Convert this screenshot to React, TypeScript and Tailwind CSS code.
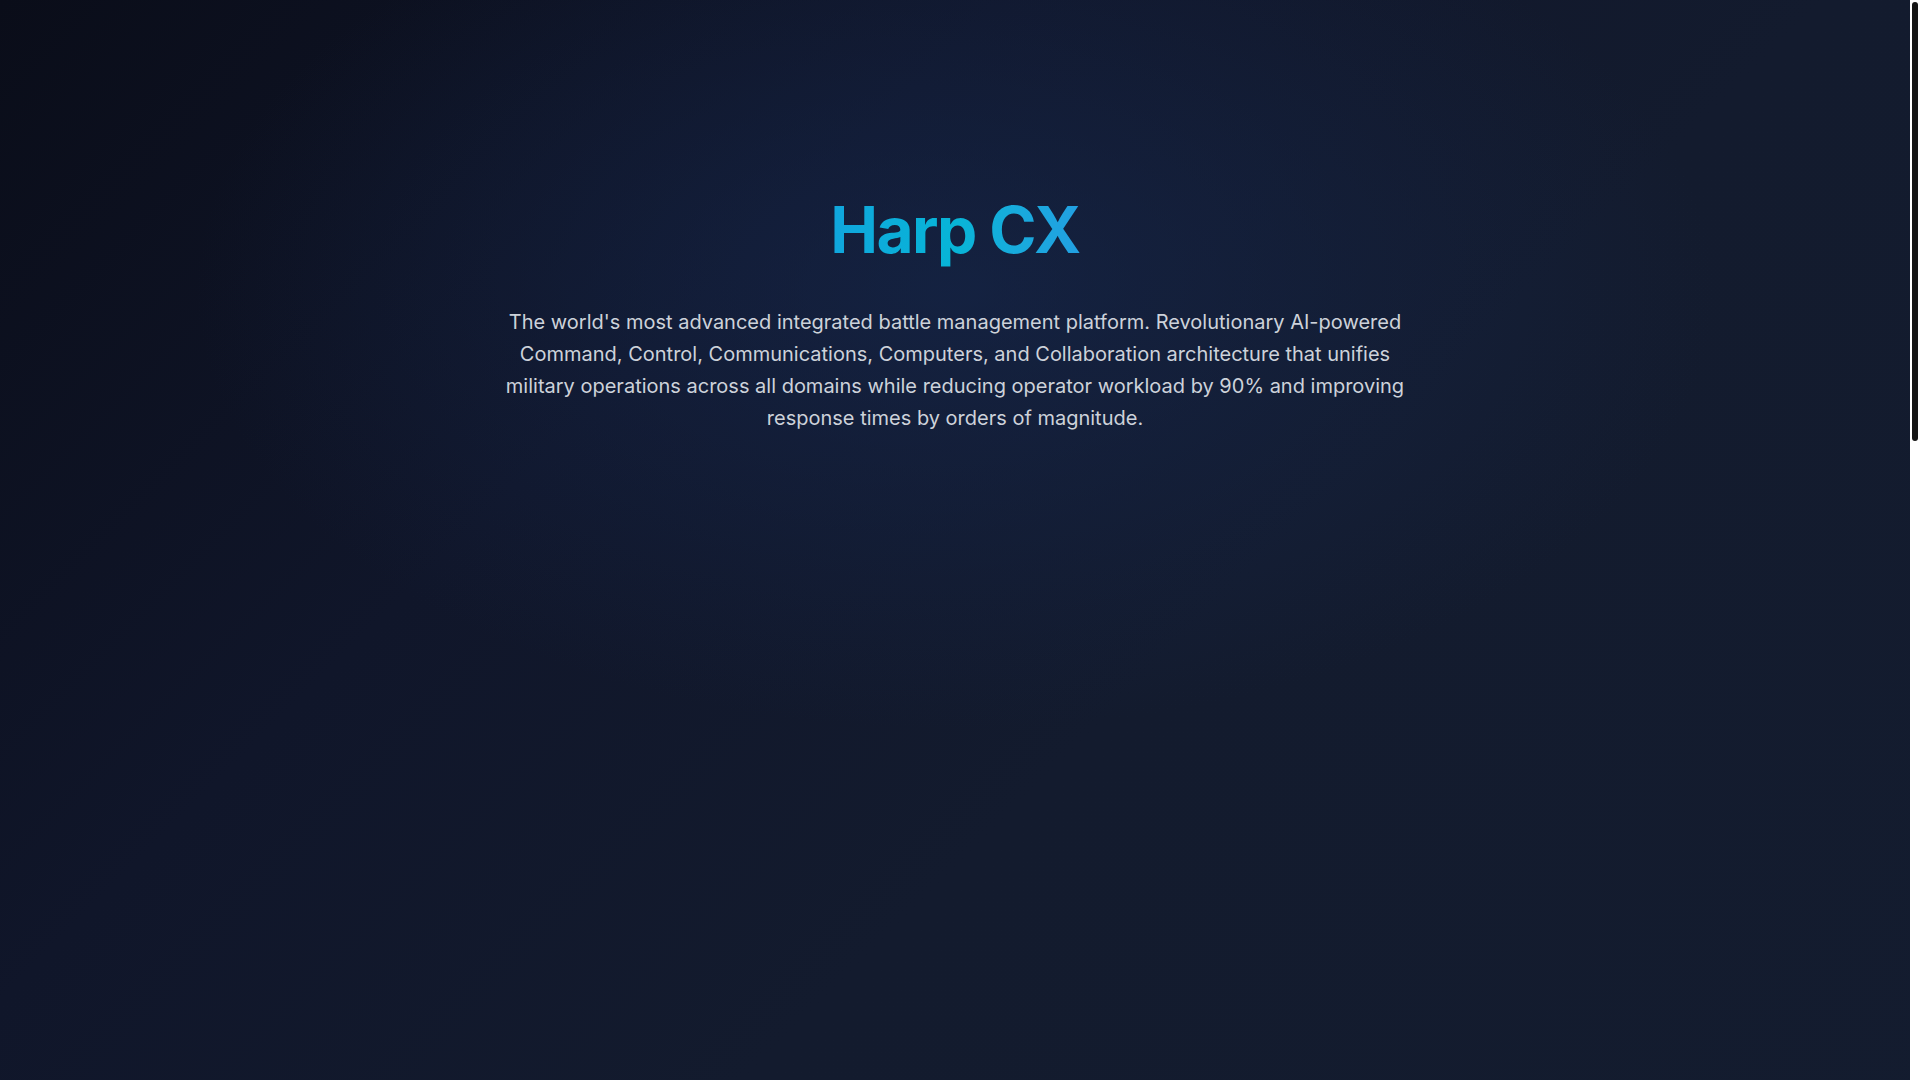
export default function App() {
  return (
    <div className="min-h-[2650px] mr-[10px] font-['Inter',sans-serif] bg-[radial-gradient(ellipse_760px_440px_at_50%_290px,rgba(22,40,78,0.62),transparent_100%),linear-gradient(135deg,#0a0d19_0%,#10162a_22%,#131b2e_40%,#141d30_100%)]">
      <section className="px-6 pt-[198px] pb-24">
        <div className="max-w-[900px] mx-auto text-center">
          <h1 className="text-[64px] leading-none font-bold tracking-tight mb-[44px]">
            <span className="bg-gradient-to-r from-[#10a6dd] via-[#07b5d7] to-[#22a0e2] bg-clip-text text-transparent">
              Harp CX
            </span>
          </h1>
          <p className="text-xl text-[#cdd2da] leading-8">
            The world's most advanced integrated battle management platform.
            Revolutionary AI-powered Command, Control, Communications,
            Computers, and Collaboration architecture that unifies military
            operations across all domains while reducing operator workload by
            90% and improving response times by orders of magnitude.
          </p>
        </div>
      </section>

      {/* scrollbar as shown in the capture */}
      <div className="fixed top-0 right-0 h-screen w-[10px] bg-white flex justify-center pt-[2px]">
        <div className="w-[6px] h-[439px] rounded-full bg-[#151515]" />
      </div>
    </div>
  );
}
